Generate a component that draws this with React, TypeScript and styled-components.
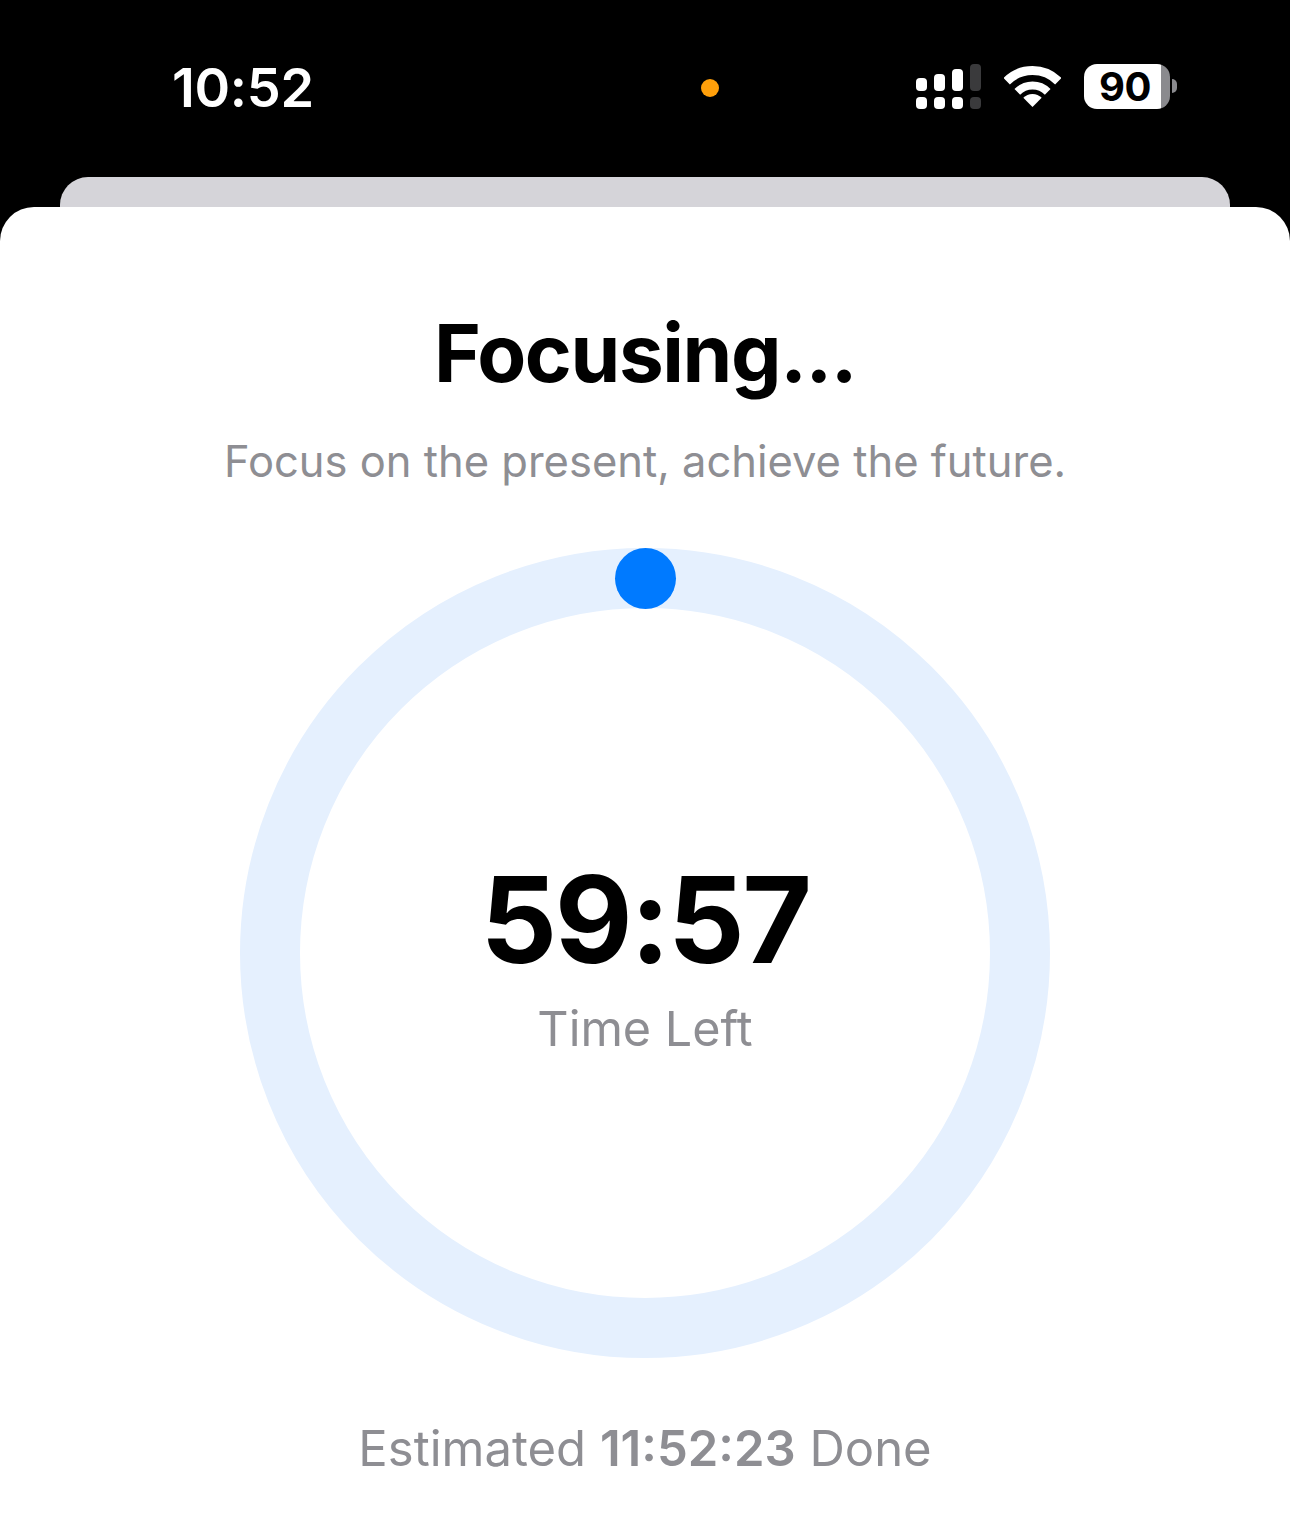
import React from "react";
import styled, { createGlobalStyle } from "styled-components";

const Global = createGlobalStyle`
  html, body { margin: 0; padding: 0; background: #000; }
  body { font-family: Inter, "Noto Sans", sans-serif; -webkit-font-smoothing: antialiased; }
`;

const Page = styled.div`
  width: 1290px;
  height: 1523px;
  background: #000;
  overflow: hidden;
  display: flex;
  flex-direction: column;
`;

const StatusBar = styled.header`
  height: 177px;
  padding-left: 172px;
  display: flex;
  align-items: flex-start;
  color: #fff;
`;

const Clock = styled.div`
  width: 529px;
  margin-top: 56px;
  font-size: 54px;
  line-height: 64px;
  font-weight: 600;
  letter-spacing: -0.3px;
`;

const RecordingDot = styled.span`
  width: 18px;
  height: 18px;
  margin-top: 79px;
  border-radius: 50%;
  background: #ff9f0a;
`;

const StatusIcons = styled.div`
  margin-left: 197px;
  margin-top: 64px;
  display: flex;
  align-items: flex-start;
`;

const WifiIcon = styled.svg`
  width: 57px;
  height: 41px;
  margin-left: 23px;
  margin-top: 2px;
  display: block;
`;

const Battery = styled.div`
  margin-left: 23px;
  width: 86px;
  height: 45px;
  border-radius: 13px;
  overflow: hidden;
  background: linear-gradient(to right, #fff 77px, #8a8a8e 77px);
  color: #000;
  font-size: 40px;
  line-height: 46px;
  font-weight: 700;
  padding-left: 15px;
  box-sizing: border-box;
  letter-spacing: -0.5px;
`;

const BatteryNub = styled.span`
  width: 5px;
  height: 14px;
  margin-left: 2px;
  margin-top: 15px;
  border-radius: 0 7px 7px 0;
  background: #8a8a8e;
`;

const BackCard = styled.div`
  height: 30px;
  margin: 0 60px;
  background: #d5d4d9;
  border-radius: 28px 28px 0 0;
`;

const Sheet = styled.main`
  flex: 1;
  background: #fff;
  border-radius: 34px 34px 0 0;
  display: flex;
  flex-direction: column;
  align-items: center;
`;

const Title = styled.h1`
  margin: 100px 0 0;
  font-size: 80px;
  line-height: 92px;
  font-weight: 700;
  color: #000;
  letter-spacing: -1.4px;
`;

const Subtitle = styled.p`
  margin: 36px 0 0;
  font-size: 43.5px;
  line-height: 52px;
  font-weight: 400;
  color: #8e8e93;
`;

const Ring = styled.div`
  position: relative;
  width: 810px;
  height: 810px;
  margin-top: 61px;
  box-sizing: border-box;
  border: 60px solid #e5f0fe;
  border-radius: 50%;
  display: flex;
  flex-direction: column;
  align-items: center;
`;

const Knob = styled.span`
  position: absolute;
  top: -60px;
  left: 50%;
  width: 61px;
  height: 61px;
  transform: translateX(-30px);
  border-radius: 50%;
  background: #007aff;
`;

const Countdown = styled.div`
  margin-top: 240px;
  font-size: 120px;
  line-height: 144px;
  font-weight: 700;
  color: #000;
  letter-spacing: -2.4px;
`;

const CountdownLabel = styled.div`
  margin-top: 7px;
  font-size: 48.5px;
  line-height: 60px;
  color: #8e8e93;
`;

const Estimate = styled.p`
  margin: 61px 0 0;
  font-size: 49px;
  line-height: 60px;
  color: #8e8e93;
`;

const EstimateTime = styled.strong`
  font-weight: 600;
`;

const SignalIcon = () => (
  <svg width="65" height="45" viewBox="0 0 65 45" style={{ display: "block" }}>
    <g fill="#fff">
      <rect x="0" y="14" width="11" height="13" rx="4" />
      <rect x="18" y="10" width="11" height="17" rx="4" />
      <rect x="36" y="5" width="11" height="22" rx="4" />
      <rect x="0" y="33" width="11" height="12" rx="4" />
      <rect x="18" y="33" width="11" height="12" rx="4" />
      <rect x="36" y="33" width="11" height="12" rx="4" />
    </g>
    <g fill="#3a3a3c">
      <rect x="54" y="0" width="11" height="27" rx="4" />
      <rect x="54" y="33" width="11" height="12" rx="4" />
    </g>
  </svg>
);

export default function App() {
  return (
    <Page>
      <Global />
      <StatusBar>
        <Clock>10:52</Clock>
        <RecordingDot />
        <StatusIcons>
          <SignalIcon />
          <WifiIcon viewBox="0 0 57 41">
            <path d="M2.7 15.2A36.5 36.5 0 0 1 54.3 15.2" fill="none" stroke="#fff" strokeWidth="9" />
            <path d="M13.3 25.8A21.5 21.5 0 0 1 43.7 25.8" fill="none" stroke="#fff" strokeWidth="8" />
            <path d="M28.5 41L19.3 31.8A13 13 0 0 1 37.7 31.8Z" fill="#fff" />
          </WifiIcon>
          <Battery>90</Battery>
          <BatteryNub />
        </StatusIcons>
      </StatusBar>
      <BackCard />
      <Sheet>
        <Title>Focusing...</Title>
        <Subtitle>Focus on the present, achieve the future.</Subtitle>
        <Ring>
          <Knob />
          <Countdown>59:57</Countdown>
          <CountdownLabel>Time Left</CountdownLabel>
        </Ring>
        <Estimate>
          Estimated <EstimateTime>11:52:23</EstimateTime> Done
        </Estimate>
      </Sheet>
    </Page>
  );
}
